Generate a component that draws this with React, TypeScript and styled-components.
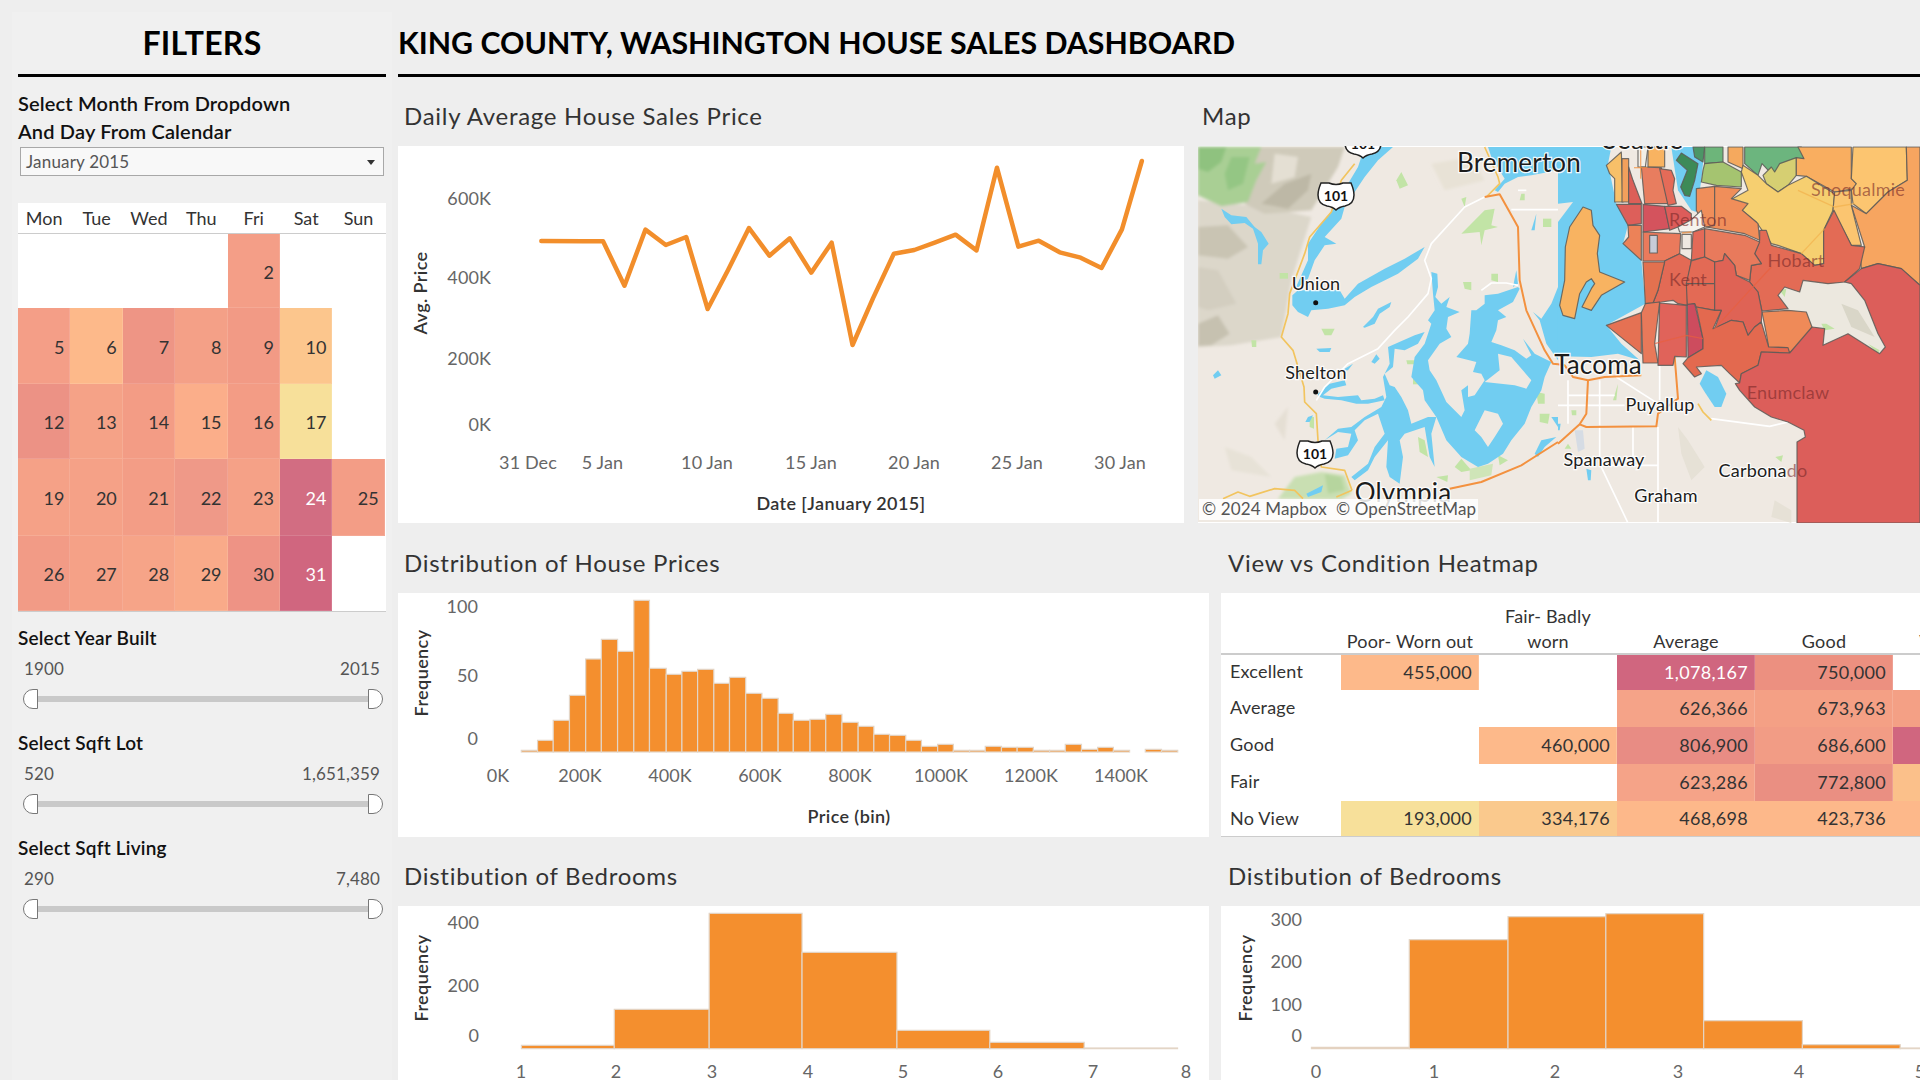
import React from 'react'
import styled, { createGlobalStyle } from 'styled-components'

const FONT = `Lato, "Open Sans", "Liberation Sans", sans-serif`

const GlobalStyle = createGlobalStyle`
  html, body {
    margin: 0;
    padding: 0;
    width: 1920px;
    height: 1080px;
    overflow: hidden;
    background: #eeeeee;
    font-family: ${FONT};
  }
`

/* ---------- page ---------- */

const Page = styled.div`
  display: flex;
  width: 1920px;
  height: 1080px;
  background: #eeeeee;
  overflow: hidden;
`

const Sidebar = styled.aside`
  width: 380px;
  height: 1068px;
  margin: 12px 0 0 12px;
  padding: 0 6px;
  box-sizing: border-box;
  background: #f0f0f0;
  flex-shrink: 0;
`

const SideTitle = styled.h1`
  margin: 0;
  height: 65px;
  box-sizing: border-box;
  padding-bottom: 2px;
  border-bottom: 3px solid #000;
  display: flex;
  align-items: center;
  justify-content: center;
  font-size: 32px;
  font-weight: 700;
  letter-spacing: 0.3px;
  color: #000;
`

const Main = styled.main`
  width: 1522px;
  margin-left: 6px;
  flex-shrink: 0;
  overflow: hidden;
`

const TopTitle = styled.h1`
  margin: 0;
  height: 77px;
  box-sizing: border-box;
  padding-top: 10px;
  border-bottom: 3px solid #000;
  display: flex;
  align-items: center;
  font-size: 30.3px;
  font-weight: 700;
  color: #000;
  white-space: nowrap;
`

const Row = styled.div<{ $height: number; $gap: number }>`
  display: flex;
  height: ${p => p.$height}px;
  gap: ${p => p.$gap}px;
`

const Section = styled.section<{ $width?: number }>`
  display: flex;
  flex-direction: column;
  min-width: 0;
  ${p => (p.$width ? `width: ${p.$width}px; flex-shrink: 0;` : 'flex: 1;')}
`

const SectionTitle = styled.h2<{ $indent: number }>`
  margin: 0;
  flex: 1;
  display: flex;
  align-items: flex-end;
  padding: 0 0 16px ${p => p.$indent}px;
  font-size: 24px;
  font-weight: 400;
  letter-spacing: 0.72px;
  color: #333;
  white-space: nowrap;
`

const Panel = styled.div<{ $height: number }>`
  height: ${p => p.$height}px;
  background: #fff;
  overflow: hidden;
  flex-shrink: 0;
`

const Chart = styled.svg`
  display: block;
  width: 100%;
  height: 100%;
`

const TickText = styled.text`
  font-family: ${FONT};
  font-size: 18px;
  letter-spacing: 0.1px;
  fill: #666;
`

const AxisLabel = styled.text`
  font-family: ${FONT};
  font-size: 18px;
  font-weight: 600;
  letter-spacing: 0.4px;
  fill: #333;
`

/* ---------- sidebar parts ---------- */

const FilterHeading = styled.div`
  margin-top: 12px;
  font-size: 20px;
  font-weight: 600;
  letter-spacing: 0.16px;
  line-height: 28px;
  color: #111;
`

const Dropdown = styled.div`
  margin: 2px 2px 0;
  height: 29px;
  box-sizing: border-box;
  padding: 0 8px 0 5px;
  display: flex;
  align-items: center;
  justify-content: space-between;
  background: #f8f8f8;
  border: 1px solid #a8a8a8;
  font-size: 17px;
  letter-spacing: 0.2px;
  color: #555;
`

const Caret = styled.span`
  width: 0;
  height: 0;
  border-left: 4px solid transparent;
  border-right: 4px solid transparent;
  border-top: 5px solid #333;
  margin-top: 2px;
`

const Calendar = styled.div`
  margin-top: 27px;
  width: 368px;
  background: #fff;
  border-bottom: 1px solid #ccc;
`

const WeekHead = styled.div`
  display: grid;
  grid-template-columns: repeat(7, 52.4px);
  height: 31px;
  box-sizing: border-box;
  border-bottom: 1px solid #ccc;
  align-items: center;
`

const DayName = styled.div`
  text-align: center;
  font-size: 18px;
  color: #333;
`

const DayGrid = styled.div`
  display: grid;
  grid-template-columns: repeat(7, 52.4px);
  grid-template-rows: 74px 76px 75px 77px 75px;
`

const DayCell = styled.div<{ $bg?: string; $light?: boolean }>`
  display: flex;
  align-items: center;
  justify-content: flex-end;
  padding: 1px 6px 0 0;
  background: ${p => p.$bg || '#fff'};
  color: ${p => (p.$light ? '#fff' : '#333')};
  font-size: 18px;
  box-shadow: ${p => (p.$bg ? 'inset -1px -1px 0 rgba(255,255,255,.12)' : 'none')};
`

const Filter = styled.div`
  margin-top: 14px;
  & + & {
    margin-top: 22px;
  }
`

const FilterLabel = styled.div`
  height: 24px;
  line-height: 24px;
  font-size: 19px;
  font-weight: 600;
  letter-spacing: 0.2px;
  color: #111;
`

const RangeValues = styled.div`
  margin-top: 7px;
  height: 24px;
  line-height: 24px;
  padding: 0 6px;
  display: flex;
  justify-content: space-between;
  font-size: 17px;
  letter-spacing: 0.15px;
  color: #555;
`

const Slider = styled.div`
  margin: 8px 3px 0 5px;
  display: flex;
  align-items: center;
`

const Thumb = styled.div<{ $side: 'left' | 'right' }>`
  width: 15px;
  height: 20px;
  box-sizing: border-box;
  background: #fff;
  border: 1px solid #777;
  border-radius: ${p => (p.$side === 'left' ? '10px 0 0 10px' : '0 10px 10px 0')};
  flex-shrink: 0;
`

const Track = styled.div`
  flex: 1;
  height: 6px;
  background: #c9c9c9;
`

/* ---------- heatmap ---------- */

const Heat = styled.div`
  display: grid;
  grid-template-columns: 120px repeat(5, 138px);
  grid-template-rows: 62px 35px 37px 37px 37px 36px;
  width: 810px;
`

const HeadCell = styled.div`
  display: flex;
  align-items: flex-end;
  justify-content: center;
  text-align: center;
  padding-bottom: 1px;
  line-height: 25px;
  font-size: 18px;
  letter-spacing: 0.2px;
  color: #333;
  box-shadow: inset 0 -2px 0 #ccc;
  white-space: nowrap;
`

const RowName = styled.div<{ $last: boolean }>`
  display: flex;
  align-items: center;
  padding: 0 0 3px 9px;
  font-size: 18px;
  letter-spacing: 0.2px;
  color: #333;
  ${p => p.$last && 'box-shadow: inset 0 -1px 0 #ccc;'}
`

const HeatCell = styled.div<{ $bg?: string; $light?: boolean; $last: boolean }>`
  display: flex;
  align-items: center;
  justify-content: flex-end;
  padding: 0 7px 2px 0;
  font-size: 18px;
  letter-spacing: 0.3px;
  background: ${p => p.$bg || '#fff'};
  color: ${p => (p.$light ? '#fff' : '#333')};
  box-shadow: ${p => (p.$last ? 'inset 0 -1px 0 #ccc' : p.$bg ? 'inset -1px 0 0 rgba(255,255,255,.15)' : 'none')};
`

/* ---------- map ---------- */

const MapLabel = styled.text<{ $size: number; $faded?: boolean }>`
  font-family: ${FONT};
  font-size: ${p => p.$size}px;
  letter-spacing: 0.2px;
  text-anchor: middle;
  fill: ${p => (p.$faded ? 'rgba(120,40,40,.6)' : '#1c1c1c')};
  stroke: ${p => (p.$faded ? 'none' : 'rgba(255,255,255,.9)')};
  stroke-width: 2.5px;
  paint-order: stroke;
`

const Attribution = styled.text`
  font-family: ${FONT};
  font-size: 17px;
  letter-spacing: 0.15px;
  white-space: pre;
  fill: #555;
`

const ShieldText = styled.text`
  font-family: ${FONT};
  font-size: 14px;
  font-weight: 700;
  text-anchor: middle;
  fill: #111;
`

/* ---------- data ---------- */

const days = ['Mon', 'Tue', 'Wed', 'Thu', 'Fri', 'Sat', 'Sun']

const calendar: ([number, string] | null)[][] = [
  [null, null, null, null, [2, '#f49e87'], null, null],
  [[5, '#f49e87'], [6, '#fdb98a'], [7, '#ee9585'], [8, '#f4a087'], [9, '#f29a85'], [10, '#fcc68d'], null],
  [[12, '#ec9285'], [13, '#f5a287'], [14, '#f39c85'], [15, '#fbae8a'], [16, '#f39c85'], [17, '#f7e09a'], null],
  [[19, '#f5a187'], [20, '#f5a187'], [21, '#f39d86'], [22, '#ef9988'], [23, '#f5a187'], [24, '#d26d82'], [25, '#f39d86']],
  [[26, '#f29b86'], [27, '#f5a187'], [28, '#f6a488'], [29, '#f9aa89'], [30, '#ee9385'], [31, '#d0667f'], null],
]

const filters = [
  { label: 'Select Year Built', min: '1900', max: '2015' },
  { label: 'Select Sqft Lot', min: '520', max: '1,651,359' },
  { label: 'Select Sqft Living', min: '290', max: '7,480' },
]

const linePoints = [
  [277, 453], [358, 454], [398, 454], [440, 587], [481, 419], [521, 465], [561, 441], [603, 657], [643, 540],
  [684, 414], [724, 497], [764, 445], [806, 548], [846, 458], [887, 765], [927, 625], [968, 491], [1008, 480],
  [1048, 458], [1089, 434], [1130, 481], [1170, 233], [1212, 470], [1252, 452], [1293, 487], [1334, 503],
  [1375, 534], [1415, 418], [1454, 213],
]

const histEdges = [232, 263, 293, 324, 355, 385, 416, 447, 477, 509, 539, 569, 600, 630, 661, 692, 723, 752, 784, 814, 845, 876, 906, 936, 967, 997, 1028, 1058, 1089, 1119, 1150, 1180, 1211, 1242, 1272, 1303, 1334, 1364, 1395, 1425, 1456, 1487]
const histTops = [631, 601, 541, 466, 357, 298, 334, 181, 385, 403, 394, 388, 430, 412, 460, 475, 520, 541, 538, 523, 547, 559, 583, 586, 601, 619, 613, 631, 631, 619, 622, 622, 631, 631, 613, 628, 622, 631, 0, 628, 631]

const heatRows: { name: string; cells: ([string, string, boolean?] | null)[] }[] = [
  { name: 'Excellent', cells: [['455,000', '#fdb98a'], null, ['1,078,167', '#d0667f', true], ['750,000', '#ec9080'], null] },
  { name: 'Average', cells: [null, null, ['626,366', '#f5a388'], ['673,963', '#f4a085'], ['', '#f4a085']] },
  { name: 'Good', cells: [null, ['460,000', '#fdb98a'], ['806,900', '#e88c84'], ['686,600', '#f29c85'], ['', '#d0667f']] },
  { name: 'Fair', cells: [null, null, ['623,286', '#f5a388'], ['772,800', '#ea8f82'], ['', '#fbc08a']] },
  { name: 'No View', cells: [['193,000', '#f7e09a'], ['334,176', '#fac98d'], ['468,698', '#fdb88a'], ['423,736', '#fdb88a'], ['', '#fdb88a']] },
]

/* map shapes: the west half and the east half are traced in 3x units, east is shifted by 1080 */
const LAND = '#efe9e2'
const WATER = '#71cdf1'
const PATCH = '#c2e4a6'

const hillsWest: [string, string][] = [
  ['#dcd7ca', '0,160 200,180 340,210 280,400 250,570 100,595 0,600'],
  ['#cfcaba', '180,0 440,0 420,60 340,190 200,200 140,170'],
  ['#bdb8a6', '190,170 260,110 340,80 330,130 270,185'],
  ['#e4dfd3', '230,20 300,30 290,90 220,110'],
  ['#c9c4b3', '0,240 90,235 150,300 90,335 0,325'],
  ['#c6c1b0', '0,530 60,505 95,560 40,595 0,597'],
  ['#d3cec0', '0,360 60,370 115,470 30,490 0,480'],
  ['#a9cf94', '0,0 190,0 170,50 205,45 175,100 150,165 70,178 0,145'],
  ['#8fc27f', '0,0 85,0 70,45 30,75 0,65'],
  ['#94c684', '100,30 155,30 135,110 90,130 80,80'],
  ['#e8e2d6', '700,50 820,30 860,100 740,130'],
  ['#e7e2d7', '80,900 160,930 220,990 100,970'],
  ['#e5dfd4', '230,830 270,780 260,880'],
  ['#c9dfb2', '240,1055 290,990 370,975 440,985 460,1040 430,1057'],
  ['#b6d59e', '380,980 430,990 440,1030 390,1040'],
]

const patchesWest: [string, string][] = [
  [PATCH, '790,260 860,190 890,185 880,235 900,240 860,250 850,295 845,255'],
  [PATCH, '1035,215 1060,215 1060,240 1035,240'],
  [PATCH, '880,380 900,380 900,405 880,400'],
  [PATCH, '795,405 820,405 820,430 800,425'],
  [PATCH, '970,140 980,140 980,160 965,160'],
  [PATCH, '790,155 805,150 800,180'],
  [PATCH, '595,100 610,75 630,115 605,125'],
  [PATCH, '370,545 410,545 400,565 380,565'],
  [PATCH, '245,378 270,378 270,395 245,395'],
  [PATCH, '625,640 650,640 648,652 628,652'],
  [PATCH, '645,695 660,695 660,712 645,712'],
  [PATCH, '1025,800 1055,800 1050,830 1025,825'],
  [PATCH, '1015,735 1040,740 1040,770 1020,770'],
  [PATCH, '900,925 930,940 905,955'],
  [PATCH, '770,960 790,935 820,970 790,975'],
  [PATCH, '715,990 750,985 748,1005'],
  ['#cfe5b8', '815,965 885,950 880,985 815,1000'],
  [PATCH, '660,870 680,880 690,930 665,915'],
  [PATCH, '160,580 175,580 175,600 162,600'],
  [PATCH, '335,810 348,810 348,845 335,840'],
]

const waterWest: string[] = [
  '470,0 585,0 540,40 500,90 440,180 430,215 380,270 415,290 380,295 350,340 330,395 290,430 330,340 330,290 370,230 420,170 450,110 480,60 490,30',
  '283,445 300,430 425,430 440,455 480,410 560,365 620,335 680,300 660,335 600,380 520,420 470,450 440,475 390,485 340,490 330,510 300,495 283,475',
  '70,185 100,205 145,210 170,240 190,255 212,290 195,310 190,352 180,352 180,290 165,245 140,228 100,232 80,210',
  '495,540 525,510 540,485 580,465 575,480 545,500 530,530 500,542',
  '45,685 60,670 70,685 50,695',
  '355,605 400,603 395,615 365,615',
  '520,645 535,622 545,635 530,650',
  '440,665 465,650 450,670 430,672',
  '360,740 395,710 440,700 445,715 400,725 375,745 420,750 480,745 490,760 530,755 555,745 560,760 510,770 475,770 430,760 380,755 360,748',
  '700,375 718,380 720,420 712,450 730,470 755,450 745,480 785,495 750,510 745,545 760,570 725,590 690,640 695,670 715,700 745,765 790,810 800,790 790,730 810,715 810,750 830,745 860,700 850,680 825,675 835,645 775,630 810,590 815,560 820,490 835,490 860,470 860,445 900,440 960,420 965,425 945,465 900,490 925,510 900,520 895,550 880,585 910,595 950,610 985,635 1000,625 975,575 1010,620 1040,635 1060,645 1040,690 1030,730 1000,780 980,830 940,880 915,920 870,950 840,960 790,930 745,880 715,810 680,760 675,730 640,690 650,630 680,590 700,530 690,520 710,490 705,440',
  '570,600 650,565 680,555 660,590 620,610 590,605 585,660 560,680 575,715 590,720 610,750 630,790 640,830 690,810 715,810 700,860 710,960 695,930 680,840 620,860 605,880 615,930 605,1010 575,990 565,960 570,880 530,930 510,970 470,1000 460,990 510,950 530,900 560,860 540,800 500,820 470,850 480,880 450,925 410,935 415,905 450,900 460,860 420,855 380,880 420,845 460,840 500,810 550,780 565,750 555,690 575,650',
  '330,810 345,805 335,825 322,825',
  '325,1040 375,1015 370,1035 330,1050',
  '1080,420 1080,640 1045,590 1025,520 1005,495 1030,515 1060,470',
  '1000,250 1015,200 1010,250',
  '945,420 955,370 960,410',
  '1010,920 1030,880 1075,870 1040,900 1020,930',
  '1060,810 1080,810 1080,840',
  '870,0 1080,0 1080,70 1000,85 960,90 920,110 900,135 890,130 920,95 880,30',
]

const landWest: string[] = [
  '830,850 860,790 900,800 915,830 890,870 870,900 850,870',
  '900,620 940,630 1000,700 985,725 950,715 860,705 905,670',
]

const whiteWest: string[] = [
  '860,150 800,180 700,290 680,340 700,395 690,440 630,510 590,550 540,605 450,650 380,720 355,760',
  '940,188 1080,188',
  '850,430 880,408 925,408 960,415',
  '960,130 985,130',
]

const yellowWest: string[] = [
  '470,50 430,100 400,195 335,270 320,320 275,440 270,500 250,570 285,610 318,720 320,765 355,800 360,880 370,960 440,970 462,1030',
  '75,1055 120,1035 155,1048 230,1025 290,1030 315,1055',
  '415,1050 462,1030',
  '860,0 900,90 905,110 865,150',
]

const orangeWest: string[] = [
  '860,150 905,142 960,240 965,400 985,490 1040,610 1065,650 1080,652',
  '755,1025 850,1005 970,955 1080,885',
]

const terrainEast: [string, string][] = [
  ['#ece8df', '735,400 810,410 860,405 880,410 920,460 960,560 982,600 965,620 870,560 795,595 800,545 762,540 745,495 690,490 660,445 680,420 725,435'],
  ['#d9d6c8', '850,470 900,490 950,570 880,540'],
  [PATCH, '665,430 685,425 680,450'],
  [PATCH, '790,530 805,530 830,545 800,550'],
  [PATCH, '930,590 965,610 960,620'],
  [PATCH, '40,120 60,125 55,135 45,138'],
  [PATCH, '0,560 15,555 15,575 0,575'],
  [PATCH, '165,760 180,710 175,760'],
  [PATCH, '40,790 55,790 55,805 42,805'],
  [PATCH, '30,890 40,905 20,905'],
  [PATCH, '370,910 385,915 378,930'],
  [PATCH, '652,930 675,925 670,945'],
  ['#e6e1d6', '360,840 390,880 440,960 400,1000 370,920'],
  ['#e6e1d6', '650,1060 700,1090 700,1128 640,1110'],
  ['#d6dce4', '50,850 75,850 80,905 60,915'],
]

const waterEast: string[] = [
  '0,0 160,0 150,50 175,170 210,235 195,290 250,340 262,470 145,535 190,590 245,640 180,620 100,630 0,628',
  '340,0 440,0 430,100 415,195 400,190 360,130',
  '425,710 445,670 480,690 505,740 490,780 470,780 440,735',
  '0,830 8,830 5,850 0,850',
  '85,965 100,970 98,1000 90,1000',
]

const landEast: string[] = ['0,170 45,165 0,225']

const whiteEast: string[] = [
  '30,700 30,830',
  '125,700 125,835',
  '225,840 225,950',
  '125,840 125,950 210,1128',
  '30,745 170,745',
  '0,775 200,775',
  '175,690 300,770',
  '305,640 305,760',
  '300,840 300,1128',
  '130,955 300,955',
  '460,815 635,838 690,825',
]

const orangeEast: string[] = [
  '0,652 20,655 45,690 90,700 140,690 250,685',
  '90,700 85,800 65,832 0,890',
  '65,832 85,840 295,838 300,800 360,755 350,630',
]

const yellowEast: string[] = ['420,770 435,795 460,820']

const regions: [string, string][] = [
  ['#f8b361', '75,180 100,190 105,235 125,265 118,320 125,375 200,405 130,445 100,490 72,480 100,425 110,410 100,395 85,405 65,440 50,515 15,505 5,475 20,400 22,300 35,240'],
  ['#f8c069', '145,55 190,15 195,165 170,165 170,95 155,80'],
  ['#f2a05c', '192,35 212,35 212,165 192,165'],
  ['#dc5f58', '212,60 225,100 252,170 212,170'],
  ['#f8b361', '270,0 320,0 320,60 270,60'],
  ['#f3efe7', '240,0 270,0 262,60 240,60'],
  ['#e87d5f', '250,60 310,62 330,170 260,170'],
  ['#e56b58', '305,65 340,70 350,95 345,130 355,170 330,175'],
  ['#3d8a58', '355,40 370,18 420,50 410,100 395,148 380,145 368,120 388,70'],
  ['#4c9666', '405,0 440,0 435,45 410,30'],
  ['#6db57a', '440,0 495,0 495,45 440,50'],
  ['#a5c470', '440,50 495,45 550,75 550,120 475,115 430,105 435,70'],
  ['#f5a95e', '510,0 555,0 555,65 510,45'],
  ['#6cb57e', '560,0 730,0 738,35 715,35 640,80 612,50 600,85 560,50'],
  ['#d6cf72', '615,85 640,60 650,75 665,50 715,32 715,85 690,115 660,135 625,110'],
  ['#f9ae60', '720,0 880,0 880,95 895,110 890,125 830,135 745,88 715,85 715,32 738,35'],
  ['#fcc570', '885,0 1045,0 1048,100 990,135 925,200 885,170 880,130 895,110 880,95'],
  ['#f7a560', '1045,0 1086,0 1086,415 1030,365 960,350 910,365 905,300 920,300 880,175 925,200 990,135 1048,100'],
  ['#f6cf70', '555,55 600,85 625,110 660,135 690,115 745,88 830,140 825,190 797,250 797,350 770,355 730,320 660,295 640,290 595,225 553,190 515,160 570,130 550,75'],
  ['#fbc570', '830,135 880,130 880,175 910,295 880,295 825,190'],
  ['#f08e5a', '415,125 470,118 470,240 440,240 415,190'],
  ['#f08e5a', '470,118 550,125 520,155 570,170 553,190 600,230 605,280 560,260 445,240 470,235'],
  ['#e36b55', '605,280 605,250 625,250 640,295 730,320 770,355 797,350 797,250 828,190 880,295 920,300 905,365 860,405 810,410 735,400 725,435 680,420 660,445 690,485 612,492 600,435 575,405 580,355 610,350 590,320'],
  ['#ef8a58', '612,495 690,490 745,495 762,540 740,575 695,618 685,602 632,600 625,560'],
  ['#dd5f5a', '175,172 250,172 250,230 210,235'],
  ['#d4535d', '255,172 320,178 335,245 255,255'],
  ['#dd5c5a', '320,178 370,178 400,200 400,220 360,240 335,250'],
  ['#ec8258', '210,235 250,235 250,340 195,290 212,270'],
  ['#ea7a5c', '255,255 368,260 365,320 320,342 255,342'],
  ['#f6f3ee', '360,240 400,218 430,190 440,240 405,255 365,255'],
  ['#efe9e2', '372,262 400,262 400,305 372,305'],
  ['#c7ccd8', '275,265 298,265 298,318 275,318'],
  ['#e36a58', '405,255 440,245 440,330 400,340'],
  ['#e87a5c', '440,245 560,265 605,285 590,320 610,350 580,355 575,400 535,385 530,355 500,320 495,340 470,345 440,330'],
  ['#e36a55', '320,342 365,320 400,340 388,410 388,475 360,470 345,460 310,465 285,468 300,430'],
  ['#e3714f', '255,345 320,345 300,430 285,468 262,470'],
  ['#e36a55', '400,342 440,330 470,345 470,410 385,410'],
  ['#e36a55', '385,410 470,410 470,490 415,480 410,470 388,475'],
  ['#df6355', '470,345 495,340 500,320 530,355 535,385 575,405 600,435 612,495 610,525 590,540 570,565 555,525 520,520 470,545 490,490 470,490'],
  ['#e57153', '145,535 250,497 250,620'],
  ['#e8795a', '250,497 262,470 305,465 290,590 300,648 255,648'],
  ['#e0635a', '305,468 385,475 385,630 350,628 345,655 300,655'],
  ['#cd4c5e', '388,472 410,470 435,575 435,605 390,632'],
  ['#e3694f', '415,480 470,490 490,490 465,545 520,520 555,525 570,565 590,540 610,525 632,600 690,602 695,618 610,615 600,655 550,680 545,708 515,680 490,655 415,660 430,680 410,690 375,650 390,632 435,605 435,575'],
  ['#dc5e5a', '860,405 910,365 960,350 1030,365 1086,415 1086,1128 717,1128 717,885 742,870 738,850 690,825 640,810 590,780 545,730 532,710 545,708 550,680 600,655 610,615 695,618 762,540 800,545 795,595 870,560 965,620 982,600 960,560 920,460 880,410'],
]

const overlayRoads: [string, string][] = [
  ['#f2b04c', '720,130 830,180 890,170'],
  ['#f2b04c', '730,320 800,245'],
  ['#e8603f', '575,430 640,360'],
  ['#e8603f', '470,545 575,430'],
  ['#e8603f', '290,590 385,565 435,575'],
  ['#f3913f', '248,0 248,95'],
  ['#f3913f', '228,62 268,62'],
  ['#f3913f', '372,258 400,255'],
]

const mapLabels: [string, number, number, number, boolean?][] = [
  ['Seattle', 445, 2, 26],
  ['Bremerton', 321, 25, 26],
  ['Tacoma', 400, 227, 26],
  ['Olympia', 205, 355, 26],
  ['Union', 118, 143, 18],
  ['Shelton', 118, 232, 18],
  ['Puyallup', 462, 264, 18],
  ['Spanaway', 406, 319, 18],
  ['Graham', 468, 355, 18],
  ['Renton', 500, 79, 18, true],
  ['Hobart', 598, 120, 18, true],
  ['Kent', 490, 139, 18, true],
  ['Snoqualmie', 660, 49, 18, true],
  ['Enumclaw', 590, 252, 18, true],
]

const Shield = ({ x, y }: { x: number; y: number }) => (
  <g transform={`translate(${x},${y})`}>
    <path
      d="M-15,-13 L-7,-13 Q0,-10 7,-13 L15,-13 Q18,-6 18,-1 Q18,8 9,10 Q3,11 0,14 Q-3,11 -9,10 Q-18,8 -18,-1 Q-18,-6 -15,-13 Z"
      fill="#fff"
      stroke="#222"
      strokeWidth="1.5"
    />
    <ShieldText x="0" y="5">101</ShieldText>
  </g>
)

const Lines = ({ list, color, width }: { list: string[]; color: string; width: number }) => (
  <>
    {list.map((points, i) => (
      <polyline key={i} points={points} fill="none" stroke={color} strokeWidth={width} strokeLinejoin="round" />
    ))}
  </>
)

const MapView = () => (
  <Chart viewBox="0 0 722 377">
    <defs>
      <filter id="soft" x="-10%" y="-10%" width="120%" height="120%">
        <feGaussianBlur stdDeviation="5" />
      </filter>
    </defs>
    <g transform="translate(0,1)">
      <rect width="722" height="375" fill={LAND} />
      <g transform="scale(0.33333)">
        <g filter="url(#soft)">
          {hillsWest.map(([fill, points], i) => <polygon key={i} points={points} fill={fill} />)}
        </g>
        {patchesWest.map(([fill, points], i) => <polygon key={i} points={points} fill={fill} />)}
        {waterWest.map((points, i) => <polygon key={i} points={points} fill={WATER} />)}
        {landWest.map((points, i) => <polygon key={i} points={points} fill={LAND} />)}
        <Lines list={whiteWest} color="#fff" width={5} />
        <Lines list={yellowWest} color="#f2c45e" width={5} />
        <Lines list={orangeWest} color="#f3913f" width={6} />
        <g transform="translate(1080,0)">
          {terrainEast.map(([fill, points], i) => <polygon key={i} points={points} fill={fill} />)}
          {waterEast.map((points, i) => <polygon key={i} points={points} fill={WATER} />)}
          {landEast.map((points, i) => <polygon key={i} points={points} fill={LAND} />)}
          <Lines list={whiteEast} color="#fff" width={5} />
          <Lines list={yellowEast} color="#f2c45e" width={5} />
          <Lines list={orangeEast} color="#f3913f" width={6} />
          {regions.map(([fill, points], i) => (
            <polygon key={i} points={points} fill={fill} stroke="#5d5a57" strokeOpacity={0.85} strokeWidth={3.5} strokeLinejoin="round" />
          ))}
          {overlayRoads.map(([color, points], i) => (
            <polyline key={i} points={points} fill="none" stroke={color} strokeWidth={4} strokeOpacity={0.7} />
          ))}
        </g>
      </g>
      <circle cx="117.7" cy="155.7" r="2.5" fill="#111" />
      <circle cx="117.7" cy="245" r="2.5" fill="#111" />
      <Shield x={165} y={-3} />
      <Shield x={138} y={49} />
      <Shield x={117} y={307} />
      {mapLabels.map(([text, x, y, size, faded]) => (
        <MapLabel key={text} x={x} y={y} $size={size} $faded={faded}>{text}</MapLabel>
      ))}
      <MapLabel x={565} y={330} $size={18}>
        Carbona<tspan fill="rgba(120,40,40,.6)" stroke="none">do</tspan>
      </MapLabel>
      <rect x="1" y="352" width="279" height="21" fill="#fff" fillOpacity=".85" />
      <Attribution x="4" y="368">© 2024 Mapbox  © OpenStreetMap</Attribution>
    </g>
  </Chart>
)

/* ---------- charts ---------- */

const LineChart = () => {
  const px = (z: number) => z / 1.96 + 2
  const py = (z: number) => z / 3 - 56
  const pts = linePoints.map(([x, y]) => `${px(x)},${py(y)}`).join(' ')
  const yTicks: [string, number][] = [['600K', 53], ['400K', 132], ['200K', 213], ['0K', 279]]
  const xTicks: [string, number][] = [['31 Dec', 130], ['5 Jan', 204.5], ['10 Jan', 309], ['15 Jan', 413], ['20 Jan', 516], ['25 Jan', 619], ['30 Jan', 722]]
  return (
    <Chart viewBox="0 0 786 377">
      {yTicks.map(([t, y]) => <TickText key={t} x="93" y={y + 6} textAnchor="end">{t}</TickText>)}
      {xTicks.map(([t, x]) => <TickText key={t} x={x} y="323" textAnchor="middle">{t}</TickText>)}
      <polyline points={pts} fill="none" stroke="#f28e2b" strokeWidth="4.5" strokeLinejoin="round" strokeLinecap="round" />
      <AxisLabel x="443" y="364" textAnchor="middle">Date [January 2015]</AxisLabel>
      <AxisLabel transform="translate(29,147) rotate(-90)" textAnchor="middle">Avg. Price</AxisLabel>
    </Chart>
  )
}

const Bar = ({ x, y, w, h }: { x: number; y: number; w: number; h: number }) => (
  <rect x={x} y={y} width={w} height={h} fill="#f48f2e" stroke="#e3d5c6" strokeWidth="1.2" />
)

const PriceHistogram = () => {
  const px = (z: number) => z / 1.912 + 2
  const py = (z: number) => z / 3 - 53
  const base = py(636)
  const xTicks: [string, number][] = [['0K', 100], ['200K', 182], ['400K', 272], ['600K', 362], ['800K', 452], ['1000K', 543], ['1200K', 633], ['1400K', 723]]
  const yTicks: [string, number][] = [['100', 14], ['50', 83], ['0', 146]]
  return (
    <Chart viewBox="0 0 811 244">
      {yTicks.map(([t, y]) => <TickText key={t} x="80" y={y + 6} textAnchor="end">{t}</TickText>)}
      {xTicks.map(([t, x]) => <TickText key={t} x={x} y="189" textAnchor="middle">{t}</TickText>)}
      {histTops.map((top, i) =>
        top ? <Bar key={i} x={px(histEdges[i])} y={py(top)} w={px(histEdges[i + 1]) - px(histEdges[i])} h={base - py(top)} /> : null,
      )}
      <AxisLabel x="451" y="230" textAnchor="middle">Price (bin)</AxisLabel>
      <AxisLabel transform="translate(30,80) rotate(-90)" textAnchor="middle">Frequency</AxisLabel>
    </Chart>
  )
}

const BedroomChart = ({
  width, scale, offset, edges, tops, yTicks, xTicks, tickX, labelX,
}: {
  width: number
  scale: number
  offset: number
  edges: number[]
  tops: number[]
  yTicks: [string, number][]
  xTicks: [string, number][]
  tickX: number
  labelX: number
}) => {
  const px = (z: number) => z / scale + offset
  const py = (z: number) => z / 3 - 56
  const base = py(596)
  return (
    <Chart viewBox={`0 0 ${width} 174`}>
      {yTicks.map(([t, y]) => <TickText key={t} x={tickX} y={y + 6} textAnchor="end">{t}</TickText>)}
      {xTicks.map(([t, x]) => <TickText key={t} x={x} y="172" textAnchor="middle">{t}</TickText>)}
      {tops.map((top, i) => (
        <Bar key={i} x={px(edges[i])} y={py(top)} w={px(edges[i + 1]) - px(edges[i])} h={base - py(top)} />
      ))}
      <AxisLabel transform={`translate(${labelX},72) rotate(-90)`} textAnchor="middle">Frequency</AxisLabel>
    </Chart>
  )
}

export default function App() {
  return (
    <Page>
      <GlobalStyle />
      <Sidebar>
        <SideTitle>FILTERS</SideTitle>
        <FilterHeading>
          Select Month From Dropdown
          <br />
          And Day From Calendar
        </FilterHeading>
        <Dropdown>
          January 2015
          <Caret />
        </Dropdown>
        <Calendar>
          <WeekHead>
            {days.map(d => <DayName key={d}>{d}</DayName>)}
          </WeekHead>
          <DayGrid>
            {calendar.flat().map((cell, i) =>
              cell ? (
                <DayCell key={i} $bg={cell[1]} $light={cell[0] === 24 || cell[0] === 31}>{cell[0]}</DayCell>
              ) : (
                <DayCell key={i} />
              ),
            )}
          </DayGrid>
        </Calendar>
        {filters.map(f => (
          <Filter key={f.label}>
            <FilterLabel>{f.label}</FilterLabel>
            <RangeValues>
              <span>{f.min}</span>
              <span>{f.max}</span>
            </RangeValues>
            <Slider>
              <Thumb $side="left" />
              <Track />
              <Thumb $side="right" />
            </Slider>
          </Filter>
        ))}
      </Sidebar>

      <Main>
        <TopTitle>KING COUNTY, WASHINGTON HOUSE SALES DASHBOARD</TopTitle>

        <Row $height={446} $gap={14}>
          <Section $width={786}>
            <SectionTitle $indent={6}>Daily Average House Sales Price</SectionTitle>
            <Panel $height={377}><LineChart /></Panel>
          </Section>
          <Section>
            <SectionTitle $indent={4}>Map</SectionTitle>
            <Panel $height={377}><MapView /></Panel>
          </Section>
        </Row>

        <Row $height={314} $gap={12}>
          <Section $width={811}>
            <SectionTitle $indent={6}>Distribution of House Prices</SectionTitle>
            <Panel $height={244}><PriceHistogram /></Panel>
          </Section>
          <Section>
            <SectionTitle $indent={7}>View vs Condition Heatmap</SectionTitle>
            <Panel $height={244}>
              <Heat>
                <HeadCell />
                <HeadCell>Poor- Worn out</HeadCell>
                <HeadCell>Fair- Badly<br />worn</HeadCell>
                <HeadCell>Average</HeadCell>
                <HeadCell>Good</HeadCell>
                <HeadCell>Very Good</HeadCell>
                {heatRows.map((row, r) => (
                  <React.Fragment key={row.name}>
                    <RowName $last={r === heatRows.length - 1}>{row.name}</RowName>
                    {row.cells.map((c, i) => (
                      <HeatCell key={i} $bg={c?.[1]} $light={c?.[2]} $last={r === heatRows.length - 1}>{c?.[0]}</HeatCell>
                    ))}
                  </React.Fragment>
                ))}
              </Heat>
            </Panel>
          </Section>
        </Row>

        <Row $height={243} $gap={12}>
          <Section $width={811}>
            <SectionTitle $indent={6}>Distibution of Bedrooms</SectionTitle>
            <Panel $height={174}>
              <BedroomChart
                width={811}
                scale={1.96}
                offset={2}
                edges={[238, 420, 606, 788, 974, 1156, 1341, 1524]}
                tops={[586, 478, 190, 307, 541, 577, 594]}
                yTicks={[['400', 17], ['200', 80], ['0', 130]]}
                xTicks={[['1', 123], ['2', 218], ['3', 314], ['4', 410], ['5', 505], ['6', 600], ['7', 695], ['8', 788]]}
                tickX={81}
                labelX={30}
              />
            </Panel>
          </Section>
          <Section>
            <SectionTitle $indent={7}>Distibution of Bedrooms</SectionTitle>
            <Panel $height={174}>
              <BedroomChart
                width={699}
                scale={2.208}
                offset={-11}
                edges={[224, 440, 658, 874, 1090, 1308, 1524, 1568]}
                tops={[592, 269, 200, 191, 512, 584, 594]}
                yTicks={[['300', 14], ['200', 56], ['100', 99], ['0', 130]]}
                xTicks={[['0', 95], ['1', 213], ['2', 334], ['3', 457], ['4', 578], ['5', 699]]}
                tickX={81}
                labelX={31}
              />
            </Panel>
          </Section>
        </Row>
      </Main>
    </Page>
  )
}
